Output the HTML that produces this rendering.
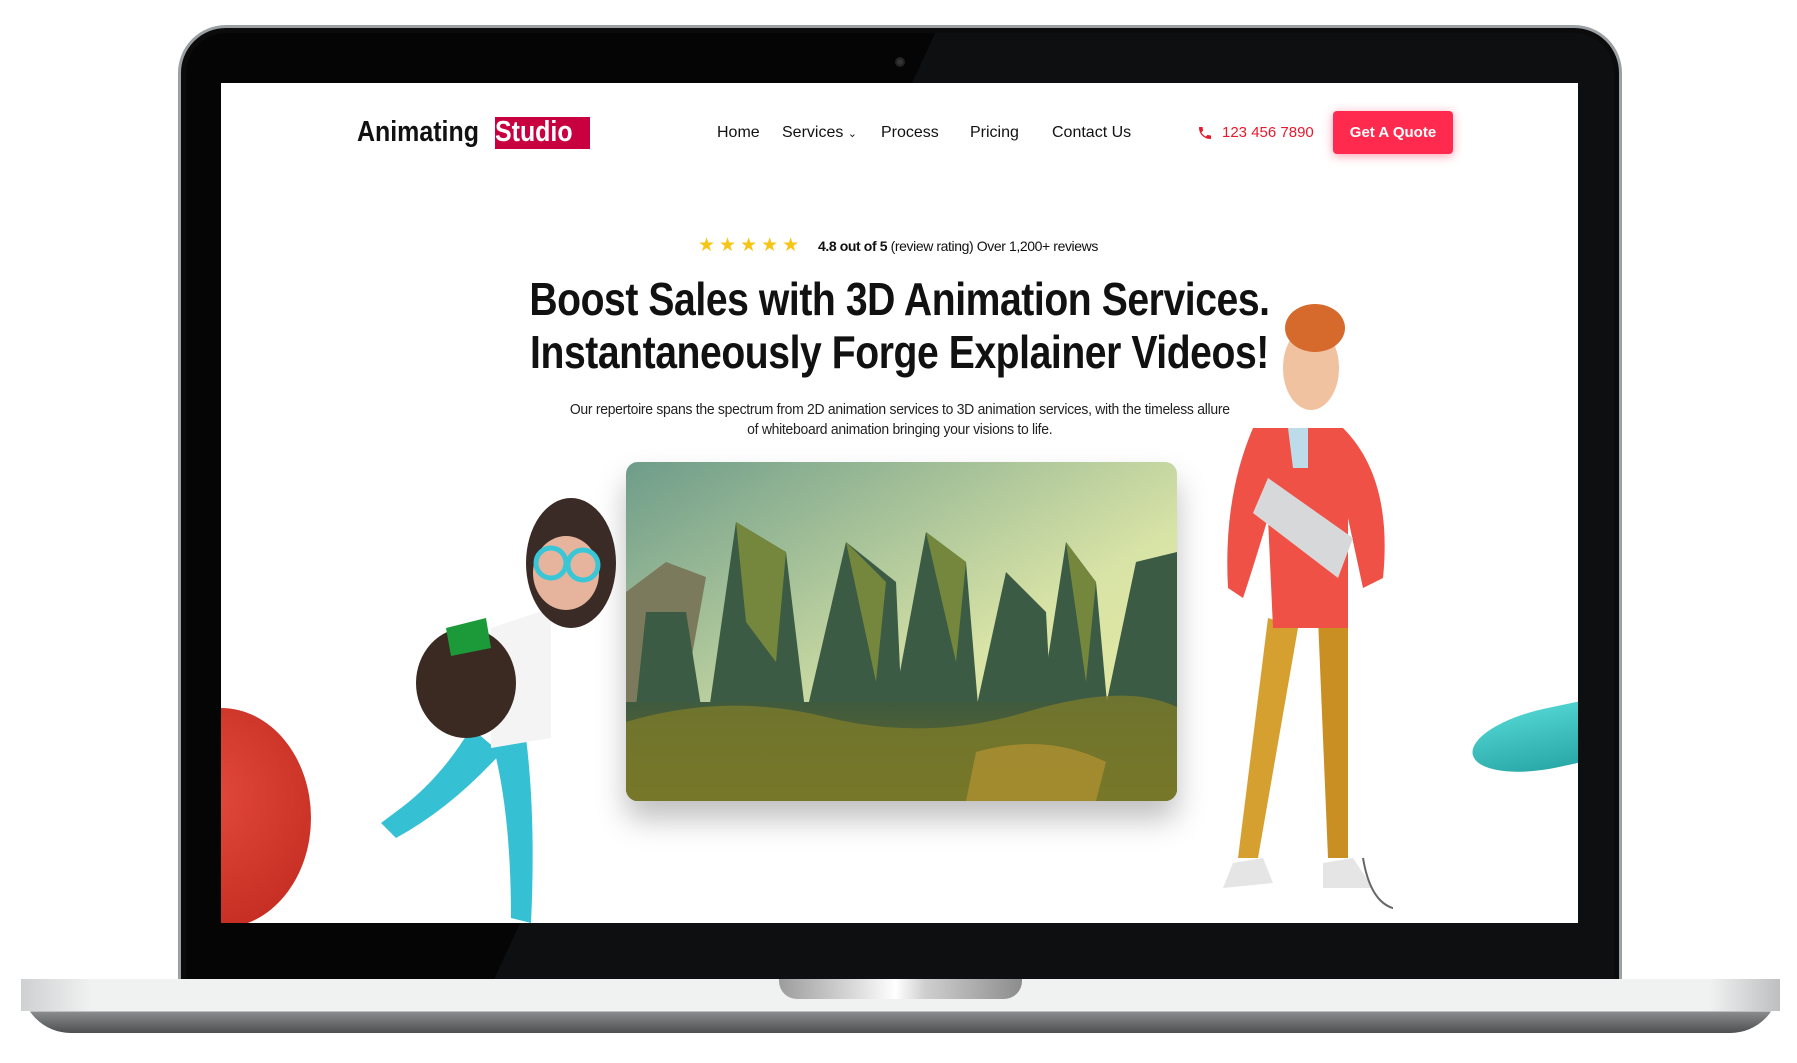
<!DOCTYPE html>
<html><head><meta charset="utf-8"><style>
*{margin:0;padding:0;box-sizing:border-box}
body{width:1797px;height:1063px;background:#fff;position:relative;overflow:hidden;font-family:"Liberation Sans",sans-serif}
.abs{position:absolute}
#bezel{left:178px;top:25px;width:1444px;height:960px;background:#0b0b0c;border-radius:48px 48px 0 0;border:3px solid #9aa0a4}
#bezelin{left:186px;top:33px;width:1428px;height:955px;border-radius:40px 40px 0 0;background:linear-gradient(115deg,#050505 0 40%,#0e0f10 40% 100%)}
#screen{left:221px;top:83px;width:1357px;height:840px;background:#fff;overflow:hidden}
#base{left:21px;top:979px;width:1759px;height:54px;border-radius:2px 2px 50px 50px;background:linear-gradient(#f0f1f1 0 32px,#8a8b8d 33px,#4e4f51 54px)}
#baseL{left:21px;top:979px;width:70px;height:32px;background:linear-gradient(90deg,#cfd0d1,#f0f1f1)}
#baseR{left:1710px;top:979px;width:70px;height:32px;background:linear-gradient(90deg,#f0f1f1,#bdbfc0)}
#notch{left:779px;top:979px;width:243px;height:20px;border-radius:0 0 18px 18px;background:linear-gradient(90deg,#9c9c9c,#d8d8d8 30%,#fff 48%,#cfcfcf 60%,#8c8c8c)}
.nav{top:41px;font-size:16px;color:#111}
</style></head><body>
<div id="bezel" class="abs"></div>
<div id="bezelin" class="abs"></div>
<div class="abs" style="left:895px;top:57px;width:10px;height:10px;border-radius:50%;background:#333;border:2px solid #222"></div>
<div id="screen" class="abs">
 <div class="abs" style="left:136px;top:33px;font-size:29px;font-weight:bold;color:#111;transform:scaleX(0.86);transform-origin:left">Animating</div>
 <div class="abs" style="left:274px;top:34px;width:95px;height:32px;background:#c8003f"></div>
 <div class="abs" style="left:274px;top:33px;font-size:29px;font-weight:bold;color:#fff;transform:scaleX(0.86);transform-origin:left">Studio</div>
 <div class="abs nav" style="left:496px">Home</div>
 <div class="abs nav" style="left:561px">Services <span style="font-size:11px">&#8964;</span></div>
 <div class="abs nav" style="left:660px">Process</div>
 <div class="abs nav" style="left:749px">Pricing</div>
 <div class="abs nav" style="left:831px">Contact Us</div>
 <svg class="abs" style="left:976px;top:42px" width="16" height="16" viewBox="0 0 24 24"><path d="M6.6 10.8c1.4 2.8 3.8 5.1 6.6 6.6l2.2-2.2c.3-.3.7-.4 1-.2 1.1.4 2.3.6 3.6.6.6 0 1 .4 1 1V20c0 .6-.4 1-1 1C10.6 21 3 13.4 3 4c0-.6.4-1 1-1h3.5c.6 0 1 .4 1 1 0 1.3.2 2.5.6 3.6.1.3 0 .7-.2 1z" fill="#e8192c"/></svg>
 <div class="abs" style="left:1001px;top:41px;font-size:15px;color:#e8192c">123 456 7890</div>
 <div class="abs" style="left:1112px;top:28px;width:120px;height:43px;background:#ff2a4e;border-radius:4px;box-shadow:0 2px 10px rgba(255,40,80,.45);color:#fff;font-size:15px;font-weight:bold;text-align:center;line-height:43px">Get A Quote</div>
 <div class="abs" style="left:477px;top:151px;color:#f5c518;font-size:19px;letter-spacing:4px">★★★★★</div>
 <div class="abs" style="left:597px;top:155px;font-size:14px;color:#111;letter-spacing:-0.4px"><b>4.8 out of 5</b> (review rating) Over 1,200+ reviews</div>
 <div class="abs" style="left:0;width:1357px;top:190px;text-align:center">
  <div style="display:inline-block;transform:scaleX(0.85);transform-origin:center;font-size:46px;font-weight:bold;color:#111;line-height:53px;white-space:nowrap;letter-spacing:-0.5px">Boost Sales with 3D Animation Services.<br>Instantaneously Forge Explainer Videos!</div>
 </div>
 <div class="abs" style="left:0;width:1357px;top:317px;text-align:center">
  <div style="display:inline-block;transform:scaleX(0.93);font-size:15px;color:#222;line-height:20px;white-space:nowrap;letter-spacing:-0.3px">Our repertoire spans the spectrum from 2D animation services to 3D animation services, with the timeless allure<br>of whiteboard animation bringing your visions to life.</div>
 </div>
 <div class="abs" style="left:405px;top:379px;width:551px;height:339px;border-radius:12px;overflow:hidden;box-shadow:0 18px 30px rgba(0,0,0,.25)">
  <svg width="551" height="339" viewBox="0 0 551 339">
   <defs><linearGradient id="sky" x1="0" y1="0" x2="1" y2="1"><stop offset="0" stop-color="#6e9c8a"/><stop offset=".6" stop-color="#d8e3a6"/><stop offset="1" stop-color="#e9ec9d"/></linearGradient>
   <linearGradient id="gr" x1="0" y1="0" x2="0" y2="1"><stop offset="0" stop-color="#3f5a3e"/><stop offset="1" stop-color="#6c6a22"/></linearGradient></defs>
   <rect width="551" height="339" fill="url(#sky)"/>
   <path d="M0 130 L40 100 L80 115 L40 339 L0 339Z" fill="#7c7a5c"/>
   <g fill="#3b5b44">
    <path d="M70 339 L110 60 L160 90 L190 339Z"/><path d="M160 339 L220 80 L270 120 L280 339Z"/>
    <path d="M250 339 L300 70 L340 100 L360 339Z"/><path d="M330 339 L380 110 L420 150 L430 339Z"/>
    <path d="M400 339 L440 80 L470 120 L490 339Z"/><path d="M460 339 L510 100 L551 90 L551 339Z"/>
    <path d="M0 339 L20 150 L60 150 L90 339Z"/>
   </g>
   <g fill="#8d9a3a" opacity=".7">
    <path d="M110 60 L160 90 L150 200 L120 160Z"/><path d="M300 70 L340 100 L330 200Z"/><path d="M440 80 L470 120 L460 220Z"/><path d="M220 80 L260 120 L250 220Z"/>
   </g>
   <rect y="240" width="551" height="99" fill="url(#gr)"/>
   <path d="M0 260 Q100 230 200 255 T400 250 T551 245 L551 339 L0 339Z" fill="#7a7a2a" opacity=".8"/>
   <path d="M350 290 Q420 270 480 300 L470 339 L340 339Z" fill="#b59332" opacity=".7"/>
  </svg>
 </div>
 <div class="abs" style="left:-90px;top:625px;width:180px;height:220px;border-radius:50%;background:radial-gradient(circle at 40% 40%,#e24a3c,#c0271d)"></div>
 <svg class="abs" style="left:140px;top:395px" width="300" height="480" viewBox="0 0 300 480">
  <path d="M110 250 Q80 300 40 330 L20 345 L35 360 Q90 330 140 275Z" fill="#36c0d4"/>
  <path d="M130 260 Q150 330 150 440 L170 445 Q175 340 165 260Z" fill="#36c0d4"/>
  <path d="M130 150 L190 130 L190 260 L130 270Z" fill="#f4f4f4"/>
  <ellipse cx="105" cy="205" rx="50" ry="55" fill="#3a2a22"/>
  <path d="M85 150 L125 140 L130 170 L90 178Z" fill="#1c9a3a"/>
  <ellipse cx="210" cy="85" rx="45" ry="65" fill="#3a2b26"/>
  <ellipse cx="205" cy="95" rx="33" ry="37" fill="#e6b49c"/>
  <circle cx="190" cy="85" r="15" fill="none" stroke="#39c6d6" stroke-width="5"/>
  <circle cx="222" cy="87" r="15" fill="none" stroke="#39c6d6" stroke-width="5"/>
 </svg>
 <svg class="abs" style="left:872px;top:215px" width="300" height="640" viewBox="0 0 300 640">
  <path d="M175 320 L145 560 L165 560 L205 330Z" fill="#d6a030"/>
  <path d="M225 320 L235 560 L255 560 L255 330Z" fill="#c98f22"/>
  <path d="M140 565 L170 560 L180 585 L130 590Z M230 565 L260 560 L280 590 L230 590Z" fill="#e5e5e5"/>
  <path d="M160 130 L250 130 Q300 180 290 280 L270 290 L255 220 L255 330 L180 330 L175 220 Q160 270 150 300 L135 290 Q130 200 160 130Z" fill="#ef5146"/>
  <path d="M175 180 L260 240 L245 280 L160 215Z" fill="#d7d8d9"/>
  <path d="M195 130 L215 130 L215 170 L200 170Z" fill="#bcdcea"/>
  <ellipse cx="218" cy="70" rx="28" ry="42" fill="#f0c2a0"/>
  <ellipse cx="222" cy="30" rx="30" ry="24" fill="#d66a2c"/>
  <path d="M270 560 Q280 620 320 610" stroke="#666" stroke-width="2" fill="none"/>
 </svg>
 <div class="abs" style="left:1250px;top:625px;width:160px;height:60px;border-radius:60% 40% 40% 60%;background:linear-gradient(#4ed1cf,#2aa9a8);transform:rotate(-12deg)"></div>
</div>
<div id="base" class="abs"></div>
<div id="baseL" class="abs"></div>
<div id="baseR" class="abs"></div>
<div id="notch" class="abs"></div>
</body></html>
